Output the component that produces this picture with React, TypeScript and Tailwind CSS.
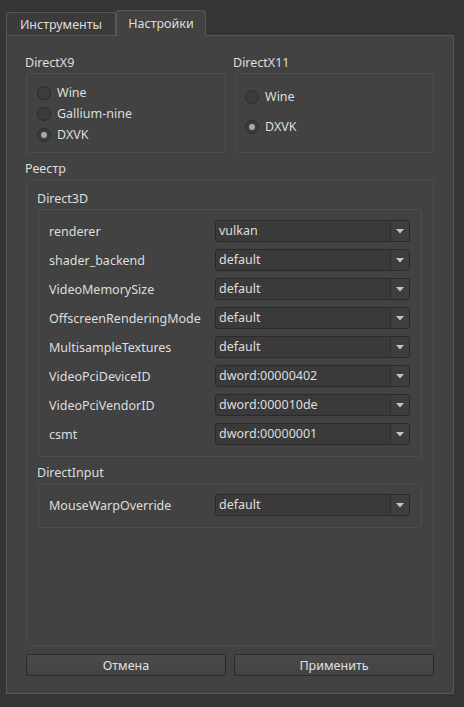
const rows: [string, string][] = [
  ["renderer", "vulkan"],
  ["shader_backend", "default"],
  ["VideoMemorySize", "default"],
  ["OffscreenRenderingMode", "default"],
  ["MultisampleTextures", "default"],
  ["VideoPciDeviceID", "dword:00000402"],
  ["VideoPciVendorID", "dword:000010de"],
  ["csmt", "dword:00000001"],
];

function Radio({ label, checked }: { label: string; checked?: boolean }) {
  return (
    <div className="flex h-[21px] items-center gap-[6px]">
      <span className="flex h-[14px] w-[14px] items-center justify-center rounded-full border border-[#2b2b2b] bg-[#3c3c3c]">
        {checked && <span className="h-[6px] w-[6px] rounded-full bg-[#a8a8a8]" />}
      </span>
      <span>{label}</span>
    </div>
  );
}

function Combo({ value }: { value: string }) {
  return (
    <div className="flex h-[22px] flex-1 rounded-[3px] border border-[#2a2a2a] bg-[#3a3a3a]">
      <span className="flex-1 pl-[3px] leading-[20px]">{value}</span>
      <span className="flex w-[19px] items-center justify-center rounded-r-[3px] border-l border-[#2e2e2e] bg-[#3e3e3e]">
        <svg width="8" height="5" viewBox="0 0 8 5">
          <path d="M0 0h8L4 4.5z" fill="#c4c4c4" />
        </svg>
      </span>
    </div>
  );
}

function Row({ label, value }: { label: string; value: string }) {
  return (
    <div className="flex h-[22px] items-center">
      <span className="w-[166px] shrink-0">{label}</span>
      <Combo value={value} />
    </div>
  );
}

function Button({ children }: { children: string }) {
  return (
    <button className="flex h-[22px] flex-1 items-center justify-center rounded-[3px] border border-[#2a2a2a] bg-gradient-to-b from-[#4a4a4a] to-[#434343] text-[#e0e0e0]">
      {children}
    </button>
  );
}

export default function App() {
  return (
    <div className="flex h-[707px] w-[464px] flex-col bg-[#353535] pb-[13px] pl-[6px] pr-[10px] pt-[10px] font-['Noto_Sans',sans-serif] text-[12.5px] leading-[17px] text-[#dedede]">
      {/* tabs */}
      <div className="flex h-[25px] items-end">
        <div className="flex h-[23px] w-[110px] items-center justify-center rounded-t-[3px] border border-b-0 border-[#575757] bg-[#3b3b3b]">
          Инструменты
        </div>
        <div className="relative z-10 -mb-px flex h-[26px] w-[90px] items-center justify-center rounded-t-[3px] border border-b-0 border-[#575757] bg-[#424242]">
          Настройки
        </div>
      </div>

      {/* pane */}
      <div className="flex flex-1 flex-col border border-[#575757] bg-[#424242] pb-[17px] pl-[18px] pr-[19px] pt-[18px]">
        <div className="flex gap-[7px]">
          <div className="flex w-[201px] flex-col gap-[2px]">
            <span>DirectX9</span>
            <div className="ml-px flex h-[80px] flex-col rounded-[2px] border border-[#4c4c4c] pl-[10px] pt-[8px]">
              <Radio label="Wine" />
              <Radio label="Gallium-nine" />
              <Radio label="DXVK" checked />
            </div>
          </div>
          <div className="flex w-[201px] flex-col gap-[2px]">
            <span>DirectX11</span>
            <div className="ml-[2px] flex h-[80px] flex-col gap-[9px] rounded-[2px] border border-[#4c4c4c] pl-[9px] pt-[12px]">
              <Radio label="Wine" />
              <Radio label="DXVK" checked />
            </div>
          </div>
        </div>

        <div className="mt-[7px] flex flex-1 flex-col gap-[2px]">
          <span>Реестр</span>
          <div className="ml-px flex flex-1 flex-col rounded-[2px] border border-[#4c4c4c] px-[11px] pt-[10px]">
            <span className="-ml-px">Direct3D</span>
            <div className="mt-[2px] flex flex-col gap-[7px] rounded-[2px] border border-[#4c4c4c] pb-[11px] pl-[10px] pr-[11px] pt-[10px]">
              {rows.map(([l, v]) => (
                <Row key={l} label={l} value={v} />
              ))}
            </div>
            <span className="-ml-px mt-[7px]">DirectInput</span>
            <div className="mt-[2px] flex flex-col rounded-[2px] border border-[#4c4c4c] pb-[11px] pl-[10px] pr-[11px] pt-[10px]">
              <Row label="MouseWarpOverride" value="default" />
            </div>
          </div>
        </div>

        <div className="ml-px mt-[8px] flex gap-[8px]">
          <Button>Отмена</Button>
          <Button>Применить</Button>
        </div>
      </div>
    </div>
  );
}
